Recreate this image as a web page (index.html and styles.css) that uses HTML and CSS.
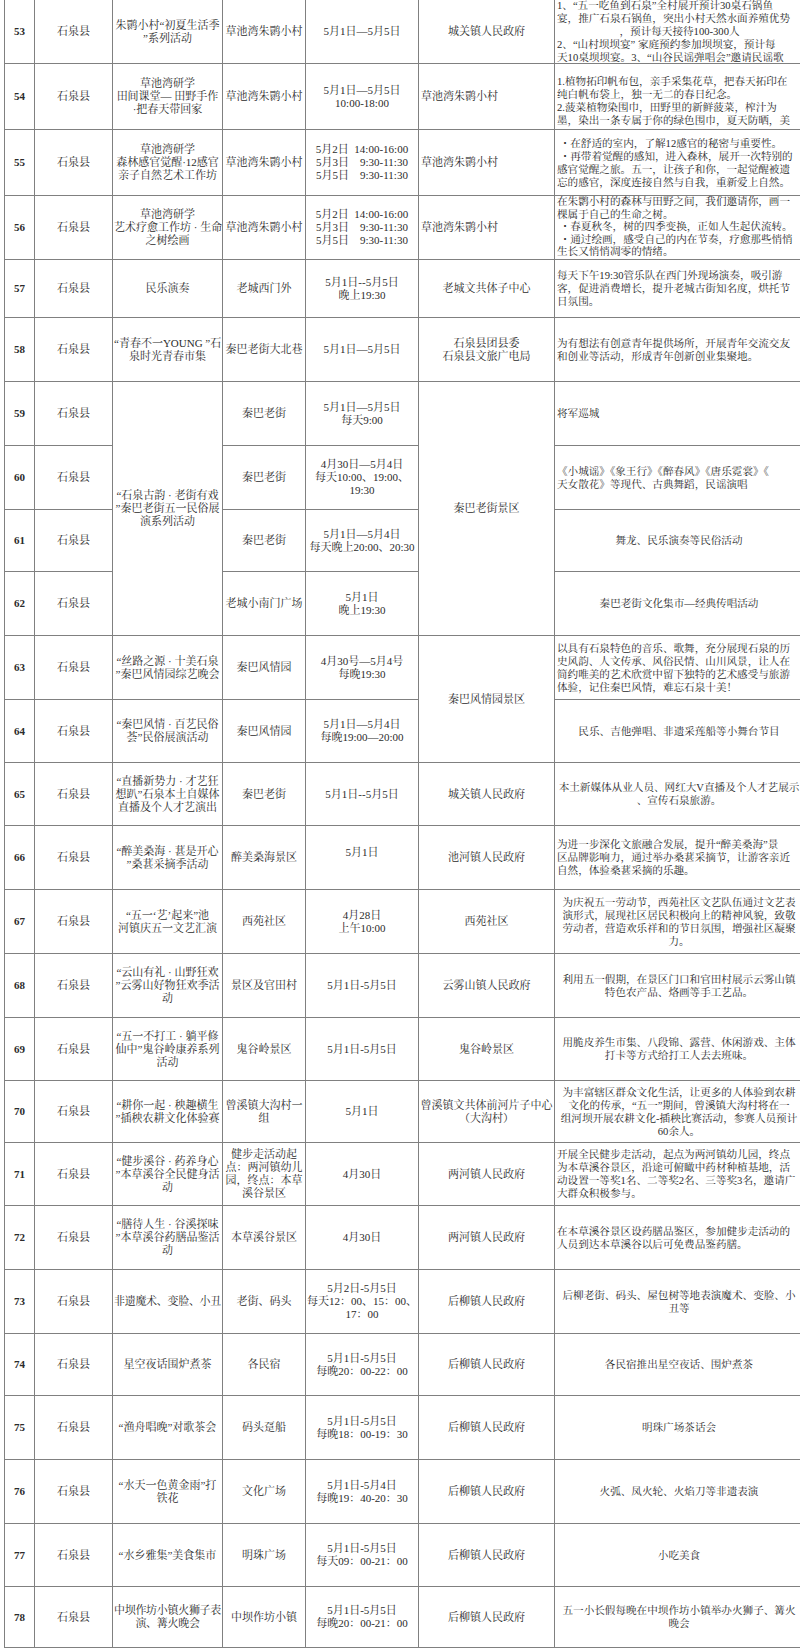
FILE: index.html
```html
<!DOCTYPE html>
<html lang="zh-CN">
<head>
<meta charset="utf-8">
<title>石泉县五一活动安排</title>
<link rel="stylesheet" href="styles.css">
</head>
<body>
<table class="sheet">
<colgroup>
<col class="c-no"><col class="c-county"><col class="c-act"><col class="c-loc"><col class="c-time"><col class="c-org"><col class="c-desc">
</colgroup>
<tbody>
<tr class="h64">
<td class="n">53</td><td>石泉县</td>
<td>朱鹮小村“初夏生活季<br>”系列活动</td>
<td>草池湾朱鹮小村</td>
<td>5月1日—5月5日</td>
<td>城关镇人民政府</td>
<td class="l top"><div class="clip">1、“五一吃鱼到石泉”全村展开预计30桌石锅鱼<br>宴，推广石泉石锅鱼，突出小村天然水面养殖优势<br><span class="ctr">，预计每天接待100-300人</span>2、“山村坝坝宴” 家庭预约参加坝坝宴，预计每<br>天10桌坝坝宴。3、“山谷民谣弹唱会”邀请民谣歌</div></td>
</tr>
<tr class="h66">
<td class="n">54</td><td>石泉县</td>
<td>草池湾研学<br>田间课堂— 田野手作<br>·把春天带回家</td>
<td>草池湾朱鹮小村</td>
<td>5月1日—5月5日<br>10:00-18:00</td>
<td class="l">草池湾朱鹮小村</td>
<td class="l pt">1.植物拓印帆布包，亲手采集花草，把春天拓印在<br>纯白帆布袋上，独一无二的春日纪念。<br>2.菠菜植物染围巾，田野里的新鲜菠菜，榨汁为<br>墨，染出一条专属于你的绿色围巾，夏天防晒，美</td>
</tr>
<tr class="h66">
<td class="n">55</td><td>石泉县</td>
<td>草池湾研学<br>森林感官觉醒·12感官<br>亲子自然艺术工作坊</td>
<td>草池湾朱鹮小村</td>
<td>5月2日&nbsp;&nbsp;14:00-16:00<br>5月3日&nbsp;&nbsp;&nbsp;&nbsp;9:30-11:30<br>5月5日&nbsp;&nbsp;&nbsp;&nbsp;9:30-11:30</td>
<td class="l">草池湾朱鹮小村</td>
<td class="l">&nbsp;・在舒适的室内，了解12感官的秘密与重要性。<br>&nbsp;・再带着觉醒的感知，进入森林，展开一次特别的<br>感官觉醒之旅。五一，让孩子和你，一起觉醒被遗<br>忘的感官，深度连接自然与自我，重新爱上自然。</td>
</tr>
<tr class="h64">
<td class="n">56</td><td>石泉县</td>
<td>草池湾研学<br>艺术疗愈工作坊 · 生命<br>之树绘画</td>
<td>草池湾朱鹮小村</td>
<td>5月2日&nbsp;&nbsp;14:00-16:00<br>5月3日&nbsp;&nbsp;&nbsp;&nbsp;9:30-11:30<br>5月5日&nbsp;&nbsp;&nbsp;&nbsp;9:30-11:30</td>
<td class="l">草池湾朱鹮小村</td>
<td class="l tight">在朱鹮小村的森林与田野之间，我们邀请你，画一<br>棵属于自己的生命之树。<br>&nbsp;・春夏秋冬，树的四季变换，正如人生起伏流转。<br>&nbsp;・通过绘画，感受自己的内在节奏，疗愈那些悄悄<br>生长又悄悄凋零的情绪。</td>
</tr>
<tr class="h58">
<td class="n">57</td><td>石泉县</td>
<td>民乐演奏</td>
<td>老城西门外</td>
<td>5月1日--5月5日<br>晚上19:30</td>
<td>老城文共体子中心</td>
<td class="l">每天下午19:30管乐队在西门外现场演奏，吸引游<br>客，促进消费增长，提升老城古街知名度，烘托节<br>日氛围。</td>
</tr>
<tr class="h64">
<td class="n">58</td><td>石泉县</td>
<td>“青春不一YOUNG ”石<br>泉时光青春市集</td>
<td>秦巴老街大北巷</td>
<td>5月1日—5月5日</td>
<td>石泉县团县委<br>石泉县文旅广电局</td>
<td class="l">为有想法有创意青年提供场所，开展青年交流交友<br>和创业等活动，形成青年创新创业集聚地。</td>
</tr>
<tr class="h64">
<td class="n">59</td><td>石泉县</td>
<td rowspan="4">“石泉古韵 · 老街有戏<br>”秦巴老街五一民俗展<br>演系列活动</td>
<td>秦巴老街</td>
<td>5月1日—5月5日<br>每天9:00</td>
<td rowspan="4">秦巴老街景区</td>
<td class="l">将军巡城</td>
</tr>
<tr class="h64">
<td class="n">60</td><td>石泉县</td>
<td>秦巴老街</td>
<td>4月30日—5月4日<br>每天10:00、19:00、<br>19:30</td>
<td class="l">《小城谣》《象王行》《醉春风》《唐乐霓裳》《<br>天女散花》等现代、古典舞蹈，民谣演唱</td>
</tr>
<tr class="h62">
<td class="n">61</td><td>石泉县</td>
<td>秦巴老街</td>
<td>5月1日—5月4日<br>每天晚上20:00、20:30</td>
<td>舞龙、民乐演奏等民俗活动</td>
</tr>
<tr class="h64">
<td class="n">62</td><td>石泉县</td>
<td>老城小南门广场</td>
<td>5月1日<br>晚上19:30</td>
<td>秦巴老街文化集市—经典传唱活动</td>
</tr>
<tr class="h64">
<td class="n">63</td><td>石泉县</td>
<td>“丝路之源 · 十美石泉<br>”秦巴风情园综艺晚会</td>
<td>秦巴风情园</td>
<td>4月30号—5月4号<br>每晚19:30</td>
<td rowspan="2">秦巴风情园景区</td>
<td class="l">以具有石泉特色的音乐、歌舞，充分展现石泉的历<br>史风韵、人文传承、风俗民情、山川风景，让人在<br>简约唯美的艺术欣赏中留下独特的艺术感受与旅游<br>体验，记住秦巴风情，难忘石泉十美！</td>
</tr>
<tr class="h63">
<td class="n">64</td><td>石泉县</td>
<td>“秦巴风情 · 百艺民俗<br>荟”民俗展演活动</td>
<td>秦巴风情园</td>
<td>5月1日—5月4日<br>每晚19:00—20:00</td>
<td>民乐、吉他弹唱、非遗采莲船等小舞台节目</td>
</tr>
<tr class="h63">
<td class="n">65</td><td>石泉县</td>
<td>“直播新势力 · 才艺狂<br>想趴”石泉本土自媒体<br>直播及个人才艺演出</td>
<td>秦巴老街</td>
<td>5月1日--5月5日</td>
<td>城关镇人民政府</td>
<td>本土新媒体从业人员、网红大V直播及个人才艺展示<br>、宣传石泉旅游。</td>
</tr>
<tr class="h64">
<td class="n">66</td><td>石泉县</td>
<td>“醉美桑海 · 葚是开心<br>”桑葚采摘季活动</td>
<td>醉美桑海景区</td>
<td class="up">5月1日</td>
<td>池河镇人民政府</td>
<td class="l">为进一步深化文旅融合发展，提升“醉美桑海”景<br>区品牌影响力，通过举办桑葚采摘节，让游客亲近<br>自然，体验桑葚采摘的乐趣。</td>
</tr>
<tr class="h64">
<td class="n">67</td><td>石泉县</td>
<td>“五一‘艺’起来”池<br>河镇庆五一文艺汇演</td>
<td>西苑社区</td>
<td>4月28日<br>上午10:00</td>
<td>西苑社区</td>
<td>为庆祝五一劳动节，西苑社区文艺队伍通过文艺表<br>演形式，展现社区居民积极向上的精神风貌，致敬<br>劳动者，营造欢乐祥和的节日氛围，增强社区凝聚<br>力。</td>
</tr>
<tr class="h64">
<td class="n">68</td><td>石泉县</td>
<td>“云山有礼 · 山野狂欢<br>”云雾山好物狂欢季活<br>动</td>
<td>景区及官田村</td>
<td>5月1日-5月5日</td>
<td>云雾山镇人民政府</td>
<td>利用五一假期，在景区门口和官田村展示云雾山镇<br>特色农产品、烙画等手工艺品。</td>
</tr>
<tr class="h63">
<td class="n">69</td><td>石泉县</td>
<td>“五一不打工 · 躺平修<br>仙中”鬼谷岭康养系列<br>活动</td>
<td>鬼谷岭景区</td>
<td>5月1日-5月5日</td>
<td>鬼谷岭景区</td>
<td>用脆皮养生市集、八段锦、露营、休闲游戏、主体<br>打卡等方式给打工人去去班味。</td>
</tr>
<tr class="h62">
<td class="n">70</td><td>石泉县</td>
<td>“耕你一起 · 秧趣横生<br>”插秧农耕文化体验赛</td>
<td>曾溪镇大沟村一<br>组</td>
<td>5月1日</td>
<td>曾溪镇文共体前河片子中心<br>（大沟村）</td>
<td>为丰富辖区群众文化生活，让更多的人体验到农耕<br>文化的传承，“五一”期间，曾溪镇大沟村将在一<br>组河坝开展农耕文化-插秧比赛活动，参赛人员预计<br>60余人。</td>
</tr>
<tr class="h63">
<td class="n">71</td><td>石泉县</td>
<td>“健步溪谷 · 药养身心<br>”本草溪谷全民健身活<br>动</td>
<td>健步走活动起<br>点：两河镇幼儿<br>园，终点：本草<br>溪谷景区</td>
<td>4月30日</td>
<td>两河镇人民政府</td>
<td class="l">开展全民健步走活动，起点为两河镇幼儿园，终点<br>为本草溪谷景区，沿途可俯瞰中药材种植基地，活<br>动设置一等奖1名、二等奖2名、三等奖3名，邀请广<br>大群众积极参与。</td>
</tr>
<tr class="h64">
<td class="n">72</td><td>石泉县</td>
<td>“膳待人生 · 谷溪探味<br>”本草溪谷药膳品鉴活<br>动</td>
<td>本草溪谷景区</td>
<td>4月30日</td>
<td>两河镇人民政府</td>
<td class="l">在本草溪谷景区设药膳品鉴区，参加健步走活动的<br>人员到达本草溪谷以后可免费品鉴药膳。</td>
</tr>
<tr class="h64">
<td class="n">73</td><td>石泉县</td>
<td class="sq">非遗魔术、变脸、小丑</td>
<td>老街、码头</td>
<td>5月2日-5月5日<br>每天12：00、15：00、<br>17：00</td>
<td>后柳镇人民政府</td>
<td>后柳老街、码头、屋包树等地表演魔术、变脸、小<br>丑等</td>
</tr>
<tr class="h62">
<td class="n">74</td><td>石泉县</td>
<td>星空夜话围炉煮茶</td>
<td>各民宿</td>
<td>5月1日-5月5日<br>每晚20：00-22：00</td>
<td>后柳镇人民政府</td>
<td>各民宿推出星空夜话、围炉煮茶</td>
</tr>
<tr class="h64">
<td class="n">75</td><td>石泉县</td>
<td>“渔舟唱晚”对歌茶会</td>
<td>码头趸船</td>
<td>5月1日-5月5日<br>每晚18：00-19：30</td>
<td>后柳镇人民政府</td>
<td>明珠广场茶话会</td>
</tr>
<tr class="h64">
<td class="n">76</td><td>石泉县</td>
<td>“水天一色黄金雨”打<br>铁花</td>
<td>文化广场</td>
<td>5月1日-5月4日<br>每晚19：40-20：30</td>
<td>后柳镇人民政府</td>
<td>火弧、凤火轮、火焰刀等非遗表演</td>
</tr>
<tr class="h63">
<td class="n">77</td><td>石泉县</td>
<td>“水乡雅集”美食集市</td>
<td>明珠广场</td>
<td>5月1日-5月5日<br>每天09：00-21：00</td>
<td>后柳镇人民政府</td>
<td>小吃美食</td>
</tr>
<tr class="h61">
<td class="n">78</td><td>石泉县</td>
<td class="sq">中坝作坊小镇火狮子表<br>演、篝火晚会</td>
<td>中坝作坊小镇</td>
<td>5月1日-5月5日<br>每晚20：00-21：00</td>
<td>后柳镇人民政府</td>
<td>五一小长假每晚在中坝作坊小镇举办火狮子、篝火<br>晚会</td>
</tr>
</tbody>
</table>
</body>
</html>
```
FILE: styles.css
```css
html, body {
  margin: 0;
  padding: 0;
  background: #ffffff;
  overflow: hidden;
}

body {
  width: 800px;
  height: 1648px;
  font-family: "Liberation Serif", "Noto Serif CJK SC", "Noto Sans CJK SC", serif;
  font-size: 11px;
  color: #2b2b2b;
}

.sheet {
  border-collapse: collapse;
  table-layout: fixed;
  width: 798px;
  margin: -1px 0 0 4px;
}

.c-no { width: 30px; }
.c-county { width: 78px; }
.c-act { width: 110px; }
.c-loc { width: 83px; }
.c-time { width: 113px; }
.c-org { width: 136px; }
.c-desc { width: 248px; }

.sheet td {
  border: 1px solid #808080;
  padding: 0 1px;
  text-align: center;
  vertical-align: middle;
  white-space: nowrap;
  overflow: hidden;
  line-height: 13px;
  font-size: 11px;
}

.sheet td:last-child {
  font-size: 10.6px;
  padding-right: 0;
}

.sheet td.l {
  text-align: left;
  padding-left: 2px;
}

.sheet td.n {
  font-weight: bold;
  font-size: 11px;
}

.sheet td.sq {
  padding: 0;
  letter-spacing: -0.3px;
}

.sheet td.top {
  vertical-align: top;
}

.sheet td.pt {
  padding-top: 9px;
}

.sheet td.tight {
  line-height: 12.6px;
}

.sheet td.up {
  vertical-align: top;
  padding-top: 20px;
}

.clip {
  height: 64px;
  overflow: hidden;
  line-height: 13px;
  margin-top: -1px;
}

.ctr {
  display: block;
  text-align: center;
}

.h58 { height: 58px; }
.h61 { height: 61px; }
.h62 { height: 62px; }
.h63 { height: 63px; }
.h64 { height: 64px; }
.h66 { height: 66px; }
```
